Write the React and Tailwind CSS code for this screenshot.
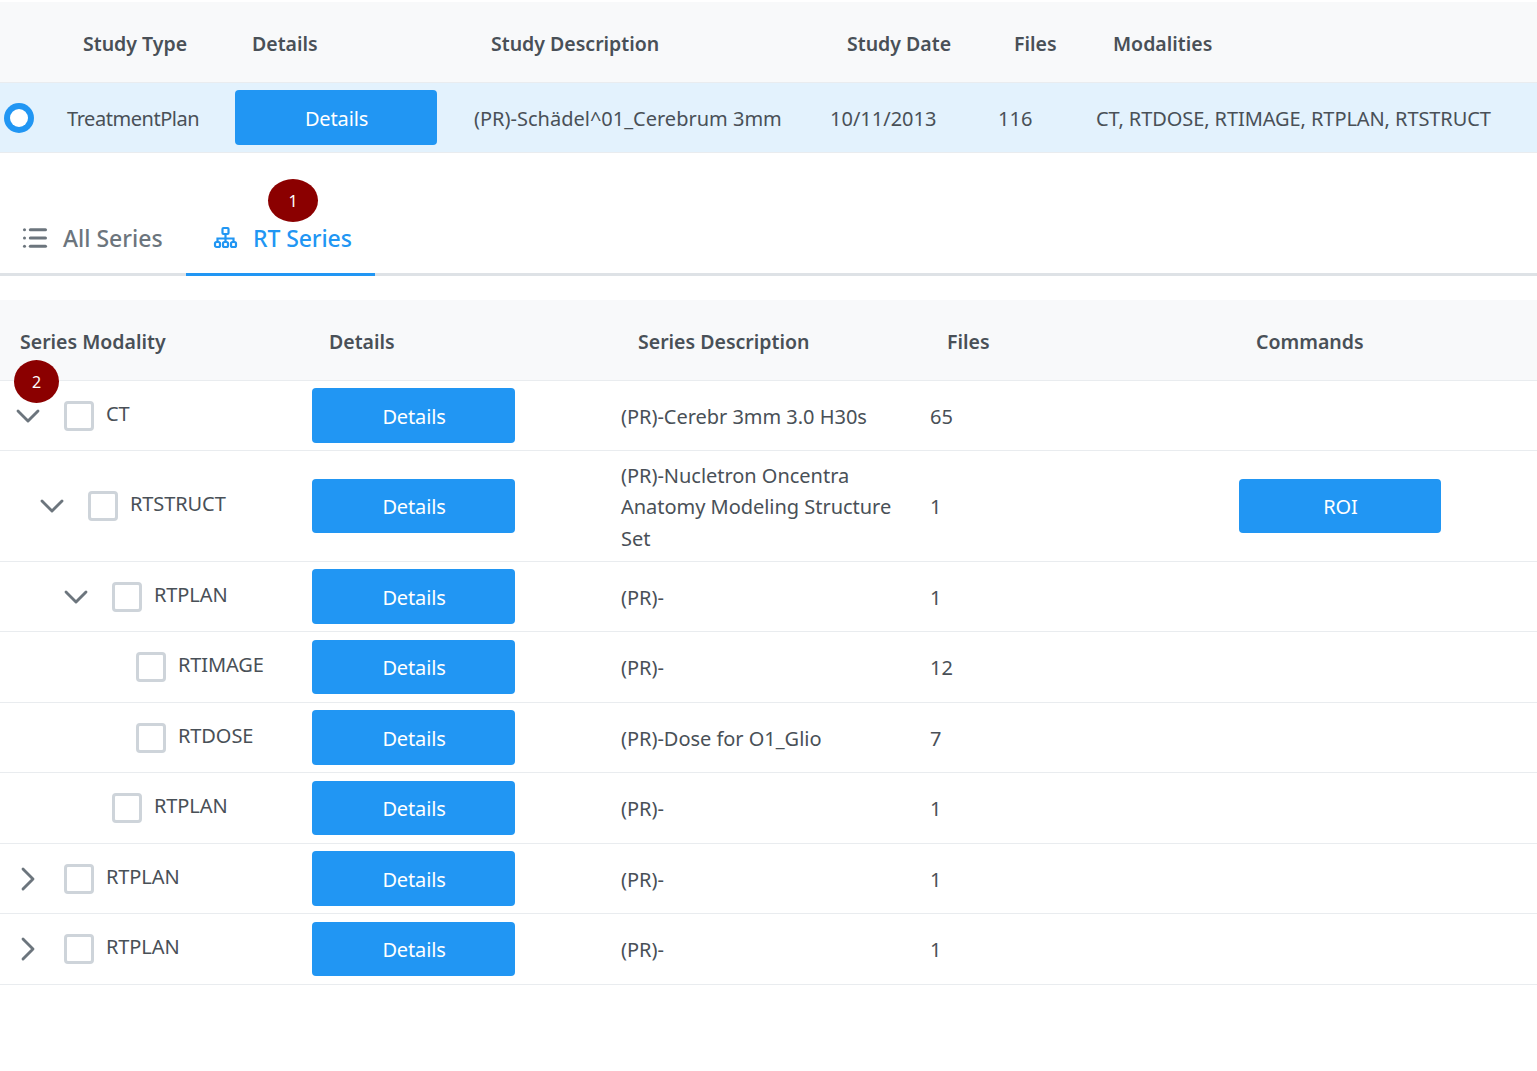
import React from 'react';
import { ChevronDown, ChevronRight, List } from 'lucide-react';

const studyCols = 'grid grid-cols-[51px_168px_239px_356px_168px_98px_1fr]';
const seriesCols = 'grid grid-cols-[296px_309px_309px_309px_1fr]';

const seriesRows = [
  { indent: 0, arrow: 'down', name: 'CT', desc: '(PR)-Cerebr 3mm 3.0 H30s', files: '65', h: 'h-[70px]' },
  { indent: 1, arrow: 'down', name: 'RTSTRUCT', desc: '(PR)-Nucletron Oncentra Anatomy Modeling Structure Set', files: '1', h: 'h-[111px]', roi: true, short: true },
  { indent: 2, arrow: 'down', name: 'RTPLAN', desc: '(PR)-', files: '1', h: 'h-[70px]' },
  { indent: 3, name: 'RTIMAGE', desc: '(PR)-', files: '12', h: 'h-[71px]', short: true },
  { indent: 3, name: 'RTDOSE', desc: '(PR)-Dose for O1_Glio', files: '7', h: 'h-[70px]' },
  { indent: 2, name: 'RTPLAN', desc: '(PR)-', files: '1', h: 'h-[71px]', short: true },
  { indent: 0, arrow: 'right', name: 'RTPLAN', desc: '(PR)-', files: '1', h: 'h-[70px]' },
  { indent: 0, arrow: 'right', name: 'RTPLAN', desc: '(PR)-', files: '1', h: 'h-[71px]', short: true },
];

const indentClass = ['ml-0', 'ml-6', 'ml-12', 'ml-[72px]'];

function BlueButton({ children, size = 'h-[55px] w-[203px]' }) {
  return (
    <button className={`block rounded bg-[#2196f3] pl-[1px] pt-[2px] text-[20px] tracking-[-0.15px] text-white ${size}`}>
      {children}
    </button>
  );
}

function Badge({ children, className = '' }) {
  return (
    <span className={`absolute flex items-center justify-center rounded-[50%] bg-[#8b0000] text-[16px] text-white ${className}`}>
      {children}
    </span>
  );
}

function SitemapIcon() {
  return (
    <svg width="26" height="24" viewBox="0 0 26 24" fill="none" stroke="#2196f3" strokeWidth="2.2">
      <rect x="9.5" y="2" width="6" height="6" rx="1" />
      <rect x="2" y="16" width="5" height="5" rx="1.5" />
      <rect x="10" y="16" width="5" height="5" rx="1.5" />
      <rect x="18" y="16" width="5" height="5" rx="1.5" />
      <path d="M12.5 8v8M4.5 16v-3.5h16V16" />
    </svg>
  );
}

function SeriesRow({ row }) {
  return (
    <div className={`${seriesCols} ${row.h} items-center border-b border-[#e9ecef] text-[20px] text-[#495057]`}>
      <div className={`relative flex items-center pl-4 ${indentClass[row.indent]}`}>
        <span className="flex h-6 w-6 items-center justify-center text-[#6c757d]">
          {row.arrow === 'down' && <ChevronDown size={40} strokeWidth={1.7} className="shrink-0" />}
          {row.arrow === 'right' && <ChevronRight size={40} strokeWidth={1.7} className="shrink-0" />}
        </span>
        <span className="ml-6 h-[30px] w-[30px] shrink-0 rounded-[4px] border-[3px] border-[#ced4da] bg-white" />
        <span className="ml-3 -translate-y-[2px] tracking-[-0.1px]">{row.name}</span>
      </div>
      <div className="pl-4">
        <BlueButton size={row.short ? 'h-[54px] w-[203px]' : 'h-[55px] w-[203px]'}>Details</BlueButton>
      </div>
      <div className="px-4 pt-[2px] leading-[31.5px] tracking-[-0.03px]">{row.desc}</div>
      <div className="pl-4 pt-[2px]">{row.files}</div>
      <div className="pl-4">{row.roi && <BlueButton size="h-[54px] w-[202px]">ROI</BlueButton>}</div>
    </div>
  );
}

export default function App() {
  return (
    <div className="relative min-h-[1071px] bg-white pt-[2px] font-['Noto_Sans',sans-serif]">
      {/* study table */}
      <div className={`${studyCols} h-[81px] items-center border-b border-[#e9ecef] bg-[#f8f9fa] pt-1 text-[19.5px] font-semibold text-[#495057]`}>
        <div />
        <div className="pl-8">Study Type</div>
        <div className="pl-[33px]">Details</div>
        <div className="pl-[33px]">Study Description</div>
        <div className="pl-[33px]">Study Date</div>
        <div className="pl-8">Files</div>
        <div className="pl-[33px]">Modalities</div>
      </div>
      <div className={`${studyCols} h-[70px] items-center border-b border-[#e9ecef] bg-[#e3f2fd] text-[20px] text-[#495057]`}>
        <div className="pl-1">
          <span className="flex h-[30px] w-[30px] items-center justify-center rounded-full bg-[#2196f3]">
            <span className="h-[18px] w-[18px] rounded-full bg-white" />
          </span>
        </div>
        <div className="pl-4 pt-[2px] tracking-[-0.45px]">TreatmentPlan</div>
        <div className="pl-4">
          <BlueButton size="h-[55px] w-[202px]">Details</BlueButton>
        </div>
        <div className="pl-4 pt-[2px]">(PR)-Schädel^01_Cerebrum 3mm</div>
        <div className="pl-4 pt-[2px]">10/11/2013</div>
        <div className="pl-4 pt-[2px]">116</div>
        <div className="pl-4 pt-[2px] tracking-[-0.08px]">CT, RTDOSE, RTIMAGE, RTPLAN, RTSTRUCT</div>
      </div>

      {/* tabs */}
      <div className="relative mt-[47px] flex h-[76px] border-b-[3px] border-[#dee2e6]">
        <div className="flex w-[186px] items-center pl-[21px] pt-[2px] text-[23px] font-medium text-[#6c757d]">
          <List size={28} strokeWidth={2.6} />
          <span className="ml-[14px] translate-y-[1px]">All Series</span>
        </div>
        <div className="relative -mb-[3px] flex w-[189px] items-center border-b-[3px] border-[#2196f3] pl-[27px] pt-[2px] text-[23px] font-medium text-[#2196f3]">
          <SitemapIcon />
          <span className="ml-[14px] translate-y-[1px] tracking-[-0.1px]">RT Series</span>
        </div>
        <Badge className="left-[268px] -top-[21px] h-[43px] w-[50px]">1</Badge>
      </div>

      {/* series table */}
      <div className="relative mt-[24px]">
        <div className={`${seriesCols} h-[81px] items-center border-b border-[#e9ecef] bg-[#f8f9fa] pt-1 text-[19.5px] font-semibold text-[#495057]`}>
          <div className="pl-5">Series Modality</div>
          <div className="pl-[33px]">Details</div>
          <div className="pl-[33px]">Series Description</div>
          <div className="pl-[33px]">Files</div>
          <div className="pl-[33px]">Commands</div>
        </div>
        {seriesRows.map((row, i) => (
          <SeriesRow key={i} row={row} />
        ))}
        <Badge className="left-[14px] top-[60px] h-[43px] w-[45px]">2</Badge>
      </div>
    </div>
  );
}
